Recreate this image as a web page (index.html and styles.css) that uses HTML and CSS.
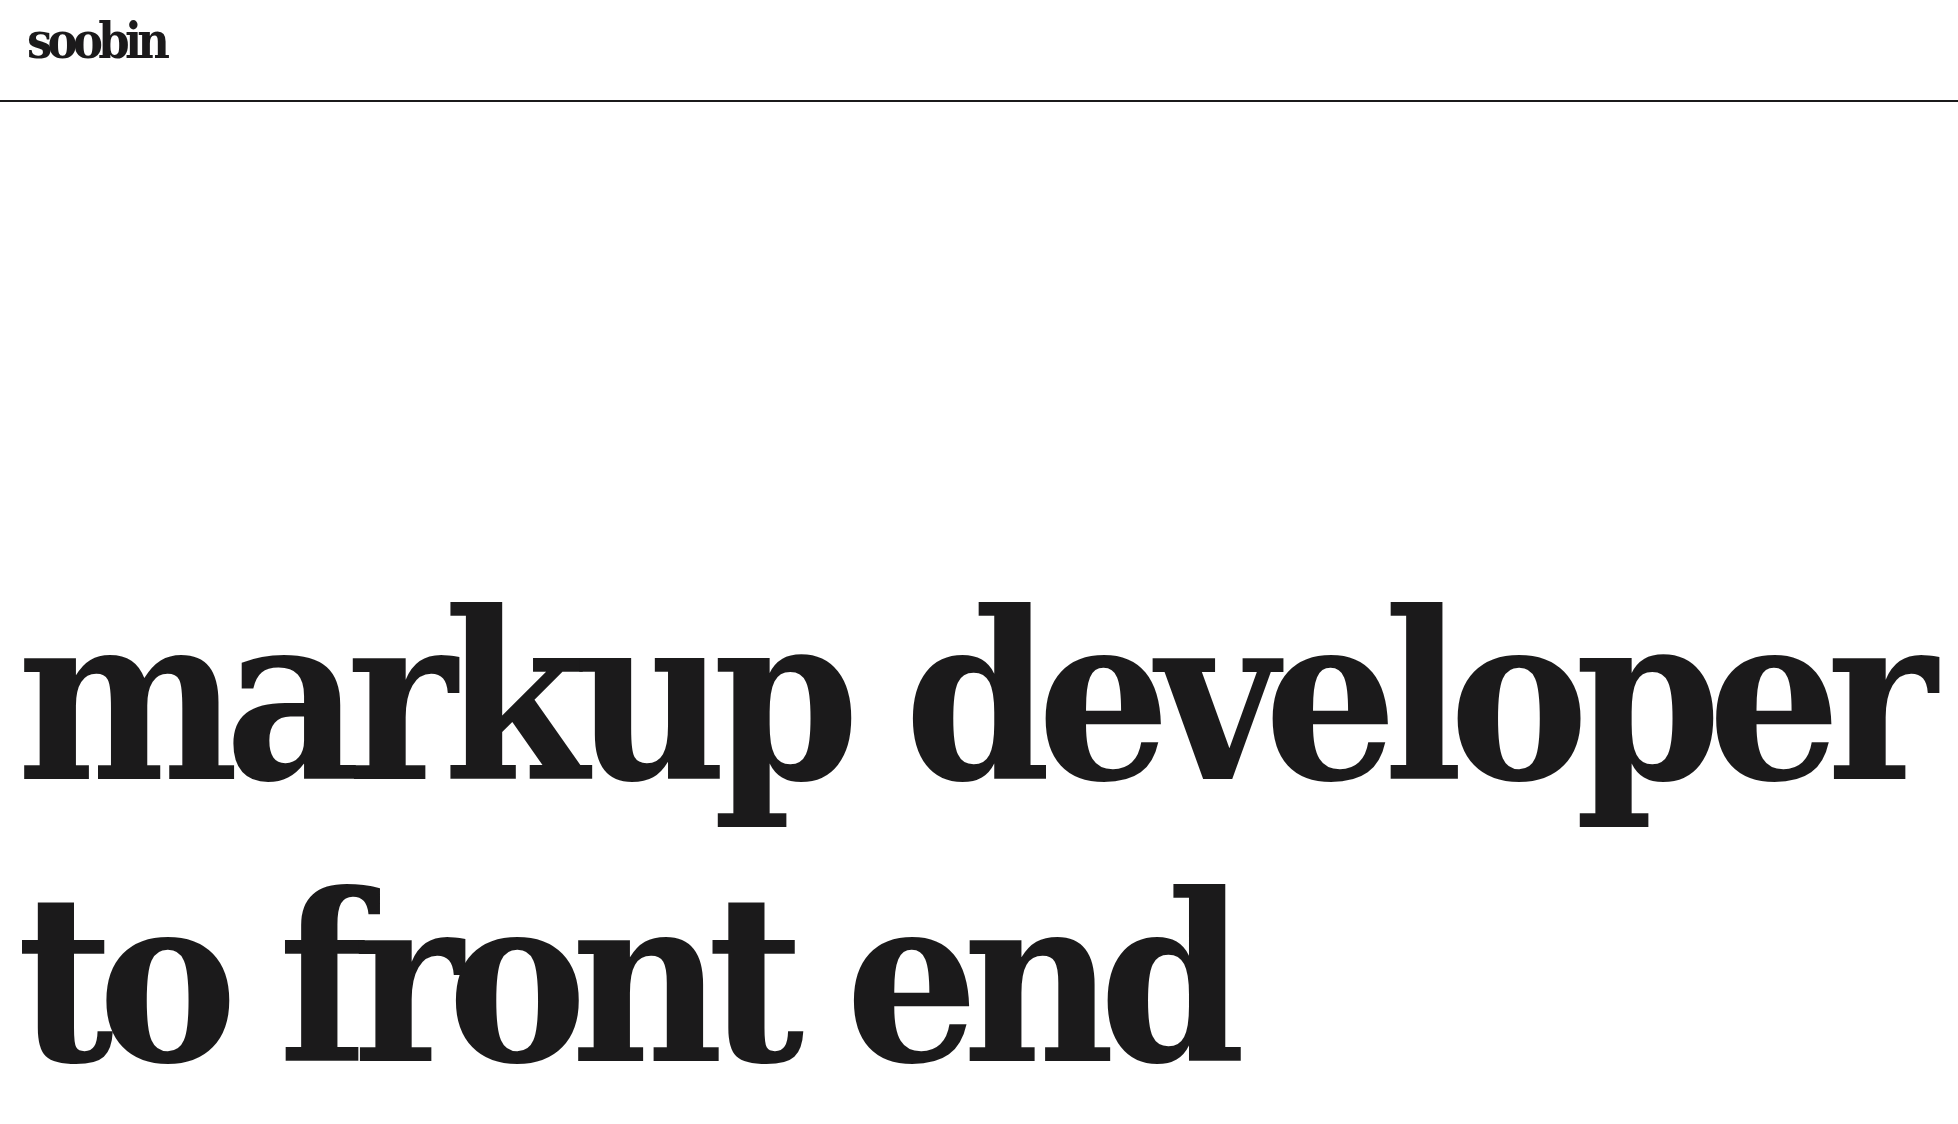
FILE: index.html
```html
<!DOCTYPE html>
<html lang="en">
<head>
<meta charset="utf-8">
<title>soobin</title>
<link rel="stylesheet" href="styles.css">
</head>
<body>
<div class="page">
  <header class="site-header">
    <a class="logo" href="#">soobin</a>
  </header>
  <main class="hero">
    <h1 class="headline">
      <span class="line">markup developer</span>
      <span class="line line-tight">to front end</span>
    </h1>
  </main>
</div>
</body>
</html>
```

FILE: styles.css
```css
html, body {
  margin: 0;
  padding: 0;
  background: #ffffff;
  color: #1b1a1b;
}
.page {
  height: 100vh;
  display: flex;
  flex-direction: column;
  font-family: "DejaVu Serif", serif;
}
.site-header {
  height: 102px;
  box-sizing: border-box;
  border-bottom: 2px solid #1b1a1b;
  padding: 16px 0 0 27px;
}
.logo {
  font-size: 50px;
  line-height: 50px;
  font-weight: 700;
  font-stretch: condensed;
  letter-spacing: -4.7px;
  color: #1b1a1b;
  text-decoration: none;
}
.hero {
  flex: 1;
  display: flex;
  flex-direction: column;
  justify-content: flex-end;
  padding: 0 0 4px 17px;
}
.headline {
  margin: 0;
  font-size: 233px;
  line-height: 282px;
  font-weight: 700;
  font-stretch: condensed;
  letter-spacing: -14px;
  white-space: nowrap;
}
.line {
  display: block;
}
.line-tight {
  letter-spacing: -16px;
}
```
